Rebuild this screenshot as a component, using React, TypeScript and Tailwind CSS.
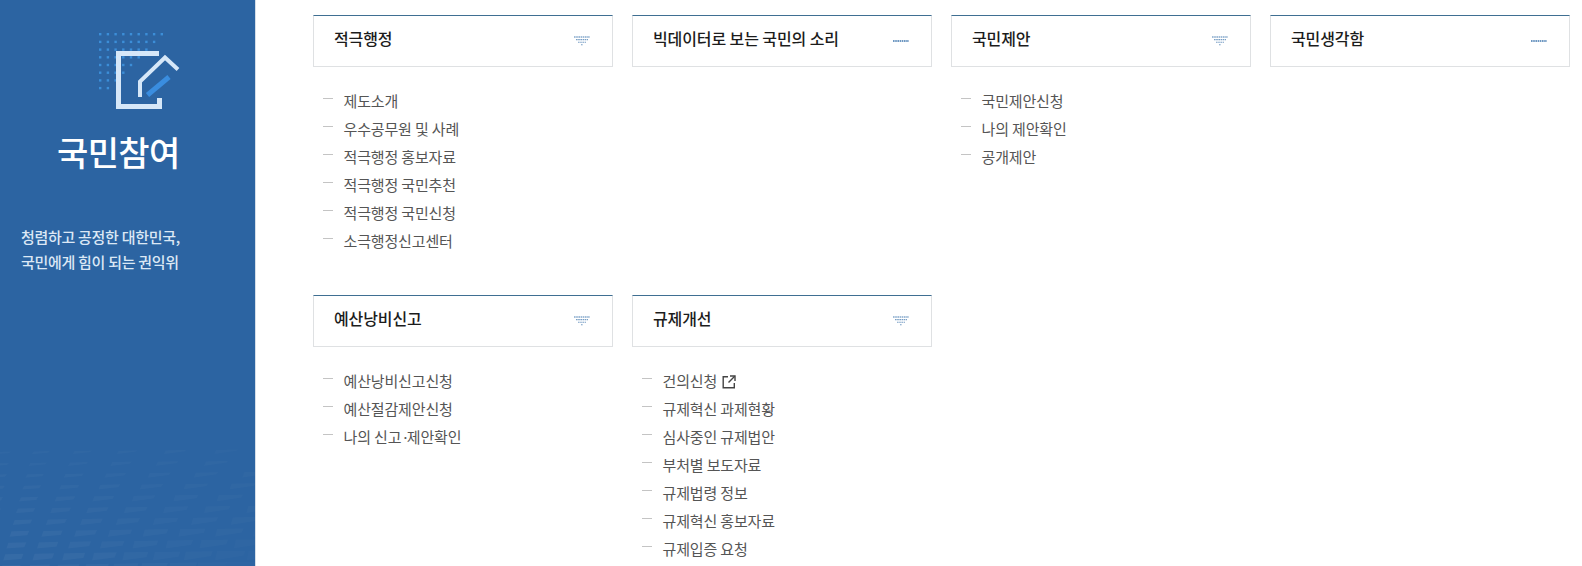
interface Section {
  title: string
  items: string[]
  flat?: boolean
}

const rowOne: Section[] = [
  {
    title: "적극행정",
    items: ["제도소개", "우수공무원 및 사례", "적극행정 홍보자료", "적극행정 국민추천", "적극행정 국민신청", "소극행정신고센터"],
  },
  { title: "빅데이터로 보는 국민의 소리", items: [], flat: true },
  { title: "국민제안", items: ["국민제안신청", "나의 제안확인", "공개제안"] },
  { title: "국민생각함", items: [], flat: true },
]

const rowTwo: Section[] = [
  { title: "예산낭비신고", items: ["예산낭비신고신청", "예산절감제안신청", "나의 신고·제안확인"] },
  {
    title: "규제개선",
    items: ["건의신청", "규제혁신 과제현황", "심사중인 규제법안", "부처별 보도자료", "규제법령 정보", "규제혁신 홍보자료", "규제입증 요청"],
  },
]

function MenuIcon({ flat }: { flat?: boolean }) {
  // dotted funnel, just one dotted line when the section has no children
  if (flat) {
    return (
      <svg width="16" height="10" viewBox="0 0 16 10" className="shrink-0">
        <line x1="0" y1="5" x2="16" y2="5" stroke="#3f76ad" strokeWidth="1.4" strokeDasharray="1.6 0.6" />
      </svg>
    )
  }
  const lines = [[0, 16], [2, 12], [4, 8], [7, 2]]
  return (
    <svg width="16" height="10" viewBox="0 0 16 10" className="shrink-0">
      {lines.map(([x, w], i) => (
        <line key={i} x1={x} y1={1 + i * 2.6} x2={x + w} y2={1 + i * 2.6} stroke="#3f76ad" strokeWidth="1.1" strokeDasharray="1.6 0.6" opacity={i === 0 ? 0.95 : 0.7} />
      ))}
    </svg>
  )
}

function LinkIcon() {
  return (
    <svg width="14" height="14" viewBox="0 0 14 14" fill="none" stroke="#444444" strokeWidth="1.4" className="ml-[5px] shrink-0">
      <path d="M6 1.7H1.2V12.8H12.3V8" />
      <path d="M8 1H13V6" />
      <path d="M12.7 1.3L6.5 7.5" />
    </svg>
  )
}

function SectionCard({ section }: { section: Section }) {
  return (
    <div>
      <div className="flex h-[52px] items-center justify-between border border-[#dfe1e3] border-t-[#3f6f92] pl-[20px] pr-[22px]">
        <span className="pb-[6px] text-[16px] leading-[24px] font-medium tracking-[-0.1px] text-[#1c1c1c]">
          {section.title}
        </span>
        <MenuIcon flat={section.flat} />
      </div>
      {section.items.length > 0 && (
        <ul className="pt-[21px]">
          {section.items.map((item) => (
            <li key={item} className="flex h-[28px] items-center pb-px pl-[10px] text-[15px] tracking-[-0.15px] text-[#555555]">
              <span className="mr-[10.5px] mb-[6px] h-[1.5px] w-[10px] bg-[#c4c4c4]" />
              {item.includes("·") ? (
                <span>
                  나의 신고<span className="tracking-[-3px]">·</span>제안확인
                </span>
              ) : (
                item
              )}
              {item === "건의신청" && <LinkIcon />}
            </li>
          ))}
        </ul>
      )}
    </div>
  )
}

function SideLogo() {
  const dots: [number, number][] = []
  for (let r = 0; r < 8; r++) {
    for (let c = 0; c < 9 - r; c++) dots.push([100 + c * 7.7, 34 + r * 7.7])
  }
  return (
    <svg width="255" height="125" viewBox="0 0 255 125" className="block">
      {dots.map(([x, y], i) => (
        <rect key={i} x={x - 1} y={y - 1} width="2.4" height="2.4" fill="#3c8ed8" />
      ))}
      <path d="M159 53.5H118.5V106.5H159.5V98" fill="none" stroke="#d6e7f8" strokeWidth="5" />
      <path d="M140 97V81.5L165 57.5L178 69.5" fill="none" stroke="#d6e7f8" strokeWidth="4" />
      <path d="M147.5 95L169 77" fill="none" stroke="#3a8ddf" strokeWidth="5" />
    </svg>
  )
}

function SideTexture() {
  const bars: { points: string; opacity: number }[] = []
  for (let row = 0; row < 11; row++) {
    const y = 453 + row * 11.4
    const depth = row / 10
    const gap = 36 - depth * 8
    const shift = -6 - row * 2.2
    for (let col = 0; col < 10; col++) {
      const x = shift + col * (gap + col * (1 - depth) * 1.6)
      const w = 15 + depth * 2 + col * 1.5
      const h = 1.2 + depth * 4
      const skew = 1 + col * 0.45
      const fade = Math.max(0, 1 - col / 9) * (0.2 + depth * 0.5)
      bars.push({
        points: `${x + 2},${y - skew} ${x + w + 2},${y - skew - 0.5} ${x + w},${y + h - skew} ${x},${y + h}`,
        opacity: 0.06 * fade + 0.012,
      })
    }
  }
  return (
    <svg width="255" height="566" viewBox="0 0 255 566" className="absolute inset-0">
      {bars.map((b, i) => (
        <polygon key={i} points={b.points} fill="#ffffff" opacity={b.opacity} />
      ))}
    </svg>
  )
}

export default function App() {
  return (
    <div className="flex h-[566px] w-[1582px] overflow-hidden bg-white font-['Noto_Sans_CJK_KR','Noto_Sans',sans-serif]">
      <aside className="relative h-full w-[255px] shrink-0 bg-[#2c64a2] shadow-[1px_0_0_#d5dee8]">
        <SideTexture />
        <div className="relative">
          <SideLogo />
          <h1 className="mt-[5px] pl-[57px] text-[34px] leading-[44px] font-medium tracking-[-0.6px] text-white">국민참여</h1>
          <p className="mt-[50px] pl-[21px] text-[15px] leading-[25px] font-medium tracking-[-0.3px] text-[#dce8f5]">
            청렴하고 공정한 대한민국,
            <br />
            국민에게 힘이 되는 권익위
          </p>
        </div>
      </aside>
      <main className="flex flex-col gap-[39px] pt-[15px] pl-[58px]">
        <div className="grid w-[1257px] grid-cols-4 gap-x-[19px]">
          {rowOne.map((s) => (
            <SectionCard key={s.title} section={s} />
          ))}
        </div>
        <div className="grid w-[1257px] grid-cols-4 gap-x-[19px]">
          {rowTwo.map((s) => (
            <SectionCard key={s.title} section={s} />
          ))}
        </div>
      </main>
    </div>
  )
}
